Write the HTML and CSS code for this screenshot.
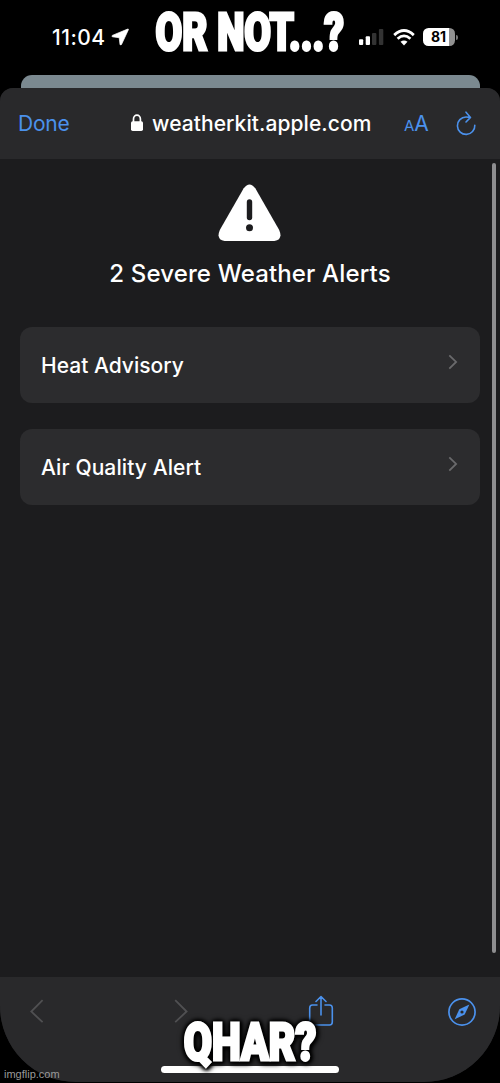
FILE: index.html
```html
<!DOCTYPE html>
<html lang="en">
<head>
<meta charset="utf-8">
<title>Severe Weather Alerts</title>
<link rel="stylesheet" href="styles.css">
</head>
<body>
<div class="phone">
  <div class="status">
    <div class="time">11:04</div>
    <svg class="location" width="18" height="18" viewBox="0 0 18 18"><path d="M16.6 1.1 1.3 7.4q-1 .6.1 1.4l6.8.9.8 6.7q.5 1.2 1.5.1L17.4 1.7q.2-1-.8-.6Z" fill="#fff" stroke="#fff" stroke-width=".7"/></svg>
    <svg class="signal" width="26" height="18" viewBox="0 0 26 18"><rect x="0" y="11.2" width="4.2" height="5.8" rx="1" fill="#fff"/><rect x="6.7" y="8.2" width="4.3" height="8.8" rx="1" fill="#fff"/><rect x="13" y="5" width="4.4" height="12" rx="1" fill="#333"/><rect x="19.9" y="1" width="4.4" height="16" rx="1" fill="#333"/></svg>
    <svg class="wifi" width="22" height="17" viewBox="0 0 22 17"><g fill="none" stroke="#fff" stroke-width="2.8"><path d="M1.2 6.1Q11-3 20.8 6.1"/><path d="M4.6 9.8q6.4-5.8 12.8 0"/></g><path d="M7.5 12.8q3.5-2.7 7 0L11 16.5Z" fill="#fff"/></svg>
    <div class="battery"><span class="charge">81</span></div><div class="battery-tip"></div>
  </div>
  <div class="back-sheet"></div>
  <main class="sheet">
    <header class="toolbar">
      <span class="done">Done</span>
      <svg class="lock" width="14" height="18" viewBox="0 0 14 18"><rect x="1" y="7.3" width="12" height="9.7" rx="1.7" fill="#fff"/><path d="M3.5 8V5a3.4 3.9 0 0 1 6.9 0v3" fill="none" stroke="#fff" stroke-width="1.7"/></svg>
      <span class="url">weatherkit.apple.com</span>
      <span class="text-size"><small>A</small>A</span>
      <svg class="reload" width="22" height="25" viewBox="0 0 22 25"><g fill="none" stroke="#4b91ec" stroke-width="1.6" stroke-linecap="round" stroke-linejoin="round"><path d="M15.2 6.4Q13.1 6 11 6A8.7 8.7 0 1 0 19.8 14.2M11 1.2l4.5 5.2L11 11"/></g></svg>
    </header>
    <section class="content">
      <svg class="warning" width="64" height="60" viewBox="0 0 64 60"><path d="M26.2 4.2q5.8-7.6 11.6 0L61.7 46q4 10-4.8 11H7.1q-8.8-1-4.8-11Z" fill="#fff"/><path d="M32 18v15.5" stroke="#1c1c1e" stroke-width="5.4" stroke-linecap="round"/><circle cx="32" cy="43.8" r="3.5" fill="#1c1c1e"/></svg>
      <h1 class="title">2 Severe Weather Alerts</h1>
      <div class="alerts">
        <div class="alert"><span class="heat">Heat Advisory</span><svg class="chevron" width="10" height="16" viewBox="0 0 10 16"><path d="m1.3 1.3 6.8 6.6-6.8 6.7" fill="none" stroke="#6a6a6c" stroke-width="1.8"/></svg></div>
        <div class="alert"><span class="air">Air Quality Alert</span><svg class="chevron" width="10" height="16" viewBox="0 0 10 16"><path d="m1.3 1.3 6.8 6.6-6.8 6.7" fill="none" stroke="#6a6a6c" stroke-width="1.8"/></svg></div>
      </div>
    </section>
    <footer class="nav">
      <svg width="14" height="24" viewBox="0 0 14 24"><path d="M12.6 1.2 1.2 12.5l11.4 10.7" fill="none" stroke="#505052" stroke-width="1.8"/></svg>
      <svg class="forward" width="14" height="24" viewBox="0 0 14 24"><path d="m1.2 1.2 11.4 11.3L1.2 23.2" fill="none" stroke="#505052" stroke-width="1.8"/></svg>
      <svg class="share" width="26" height="32" viewBox="0 0 26 32"><g fill="none" stroke="#4b91ec" stroke-width="1.6" stroke-linecap="round" stroke-linejoin="round"><path d="M9 10H4.5Q1.7 10 1.7 13v14q0 3 2.8 3h17q2.8 0 2.8-3V13q0-3-2.8-3H17M13 20V1.5M8 6.5l5-5 5 5"/></g></svg>
      <svg class="compass" width="30" height="30" viewBox="0 0 30 30"><circle cx="15" cy="15" r="13.1" fill="none" stroke="#4b91ec" stroke-width="1.7"/><path d="M22.4 7.5 12.3 12.2 7.7 22.3l10-4.8Z" fill="#4b91ec"/><circle cx="15" cy="15" r="1.6" fill="#29292b"/></svg>
    </footer>
  </main>
  <div class="home-bar"></div>
  <div class="scrollbar"></div>
  <svg class="caption caption-top" width="200" height="70" viewBox="150 0 200 70">
    <text transform="translate(155.5 49.8) scale(.745 1)">OR NOT...?</text>
  </svg>
  <svg class="caption caption-bottom" width="150" height="73" viewBox="175 1010 150 73">
    <text transform="translate(183.8 1059.8) scale(.785 1)">QHAR?</text>
  </svg>
  <div class="watermark">imgflip.com</div>
</div>
</body>
</html>
```
FILE: styles.css
```css
* { box-sizing: border-box; }
body { margin: 0; background: #000; font-family: Inter, "Liberation Sans", sans-serif; color: #fff; }
svg { display: block; flex: none; }
.phone { position: relative; width: 500px; height: 1083px; overflow: hidden; background: #000; }
.status { display: flex; height: 75px; padding-left: 52px; align-items: flex-start; white-space: nowrap; }
.time { width: 59px; padding-top: 25px; font-size: 21px; line-height: 25px; font-weight: 500; letter-spacing: .5px; }
.location { margin-top: 28px; }
.signal { margin: 28px 0 0 230px; }
.wifi { margin: 29px 0 0 8px; }
.battery { width: 32px; height: 18px; margin: 28px 0 0 8px; border-radius: 5.5px; background: linear-gradient(90deg, #fff 81%, #919191 81%); }
.charge { display: block; width: 31px; text-align: center; color: #000; font-size: 14px; line-height: 18px; font-weight: 700; }
.battery-tip { width: 1.5px; height: 5px; margin: 35px 0 0 1px; background: #777; border-radius: 0 2px 2px 0; }
.back-sheet { height: 13px; margin: 0 20.5px; border-radius: 11px 11px 0 0; background: #7b8990; }
.sheet { display: flex; flex-direction: column; height: 994px; border-radius: 13px 13px 76px 76px; overflow: hidden; background: #1c1c1e; }
.toolbar { display: flex; height: 71px; padding: 0 23px 0 18px; align-items: center; background: #29292b; white-space: nowrap; }
.done { width: 112px; color: #4b91ec; font-size: 21px; letter-spacing: -.2px; }
.lock { margin-top: -1px; }
.url { width: 252px; padding-left: 8px; font-size: 21px; font-weight: 500; letter-spacing: .07px; }
.text-size { width: 59px; padding: 2px 0 0 8px; color: #4b91ec; font-size: 21px; line-height: 24px; }
.text-size small { font-size: 15px; }
.content { flex: 1; padding: 25px 20px 0; }
.warning { margin: 0 auto; width: 64px; transform: translateX(-.5px); }
.title { margin: 15px 0 0; font-size: 24px; line-height: 30px; font-weight: 500; text-align: center; white-space: nowrap; letter-spacing: .15px; }
.alerts { display: grid; gap: 26px; margin-top: 38px; }
.alert { display: flex; height: 76px; padding: 0 22px 0 21px; align-items: center; justify-content: space-between; border-radius: 12px; background: #2c2c2e; font-size: 21px; font-weight: 500; }
.heat { letter-spacing: .02px; }
.air { letter-spacing: .1px; }
.chevron { margin-top: -6px; }
.nav { display: flex; height: 105px; padding: 22px 23px 0 30px; align-items: flex-start; background: #29292b; }
.forward { margin-left: 130px; }
.share { margin: -4px 0 0 120px; }
.compass { margin: -2px 0 0 auto; }
.home-bar { position: absolute; left: 161px; top: 1066px; width: 178px; height: 7px; border-radius: 4px; background: #fff; }
.scrollbar { position: absolute; left: 492px; top: 163px; width: 4px; height: 790px; border-radius: 2px; background: #8e8e90; }
.caption { position: absolute; overflow: visible; font: 900 52px Roboto, sans-serif; fill: #fff; stroke: #fff; stroke-width: 3px; stroke-linejoin: miter; stroke-miterlimit: 3; filter: drop-shadow(0 0 2px #000) drop-shadow(0 0 2px #000) drop-shadow(1px 1px 1px #000); }
.caption-top { left: 150px; top: 0; }
.caption-bottom { left: 175px; top: 1010px; }
.watermark { position: absolute; left: 4px; top: 1067px; font: 11px/14px "Liberation Sans", sans-serif; color: #999; }
```
